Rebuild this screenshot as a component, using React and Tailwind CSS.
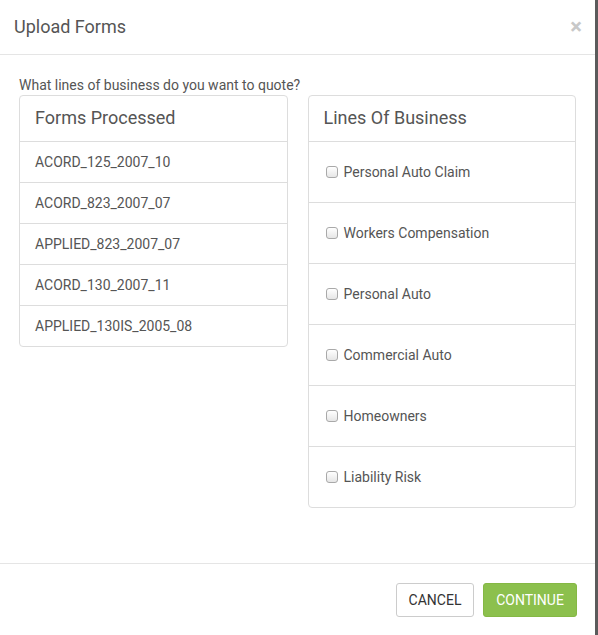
export default function App() {
  const forms = ["ACORD_125_2007_10", "ACORD_823_2007_07", "APPLIED_823_2007_07", "ACORD_130_2007_11", "APPLIED_130IS_2005_08"];
  const lines = ["Personal Auto Claim", "Workers Compensation", "Personal Auto", "Commercial Auto", "Homeowners", "Liability Risk"];
  return (
    <div className="flex h-[635px] w-[598px] bg-[#5b5b5b]" style={{ fontFamily: "Roboto, 'Liberation Sans', sans-serif" }}>
      <div className="flex w-[595px] flex-col bg-white text-[#555]">
        <div className="flex h-[55px] items-center justify-between border-b border-[#e5e5e5] pl-[14px] pr-[13px]">
          <div className="text-[18px] leading-none text-[#555]">Upload Forms</div>
          <div className="text-[22px] font-bold leading-none text-[#c8c8c8]">×</div>
        </div>
        <div className="flex-1 px-[19px] pt-[22px]">
          <div className="text-[14px] leading-[17px] text-[#555]">What lines of business do you want to quote?</div>
          <div className="mt-px flex items-start gap-[20px]">
            <div className="w-[269px] rounded-[4px] border border-[#ddd]">
              <div className="flex h-[46px] items-center border-b border-[#ddd] px-[15px] pb-[3px] text-[18px] text-[#555]">Forms Processed</div>
              {forms.map((f, i) => (
                <div key={f} className={i < forms.length - 1 ? "flex h-[41px] items-center border-b border-[#ddd] px-[15px] text-[14px]" : "flex h-[40px] items-center px-[15px] text-[14px]"}>{f}</div>
              ))}
            </div>
            <div className="w-[269px] rounded-[4px] border border-[#ddd]">
              <div className="flex h-[46px] items-center border-b border-[#ddd] px-[15px] pb-[3px] text-[18px] text-[#555]">Lines Of Business</div>
              {lines.map((l, i) => (
                <div key={l} className={i < lines.length - 1 ? "flex h-[61px] items-center border-b border-[#ddd] px-[17px] text-[14px]" : "flex h-[60px] items-center px-[17px] text-[14px]"}>
                  <span className="mr-[6px] inline-block h-[12px] w-[12px] rounded-[3px] border border-[#a9a9a9] bg-gradient-to-b from-white to-[#e6e6e6]" />
                  <span>{l}</span>
                </div>
              ))}
            </div>
          </div>
        </div>
        <div className="flex h-[72px] items-start justify-end gap-[9px] border-t border-[#e5e5e5] pr-[18px] pt-[19px]">
          <button className="h-[34px] w-[78px] rounded-[3px] border border-[#ccc] bg-white text-[14px] text-[#333]">CANCEL</button>
          <button className="h-[34px] w-[94px] rounded-[3px] border border-[#85b844] bg-[#8cc04d] text-[14px] text-white">CONTINUE</button>
        </div>
      </div>
    </div>
  );
}
